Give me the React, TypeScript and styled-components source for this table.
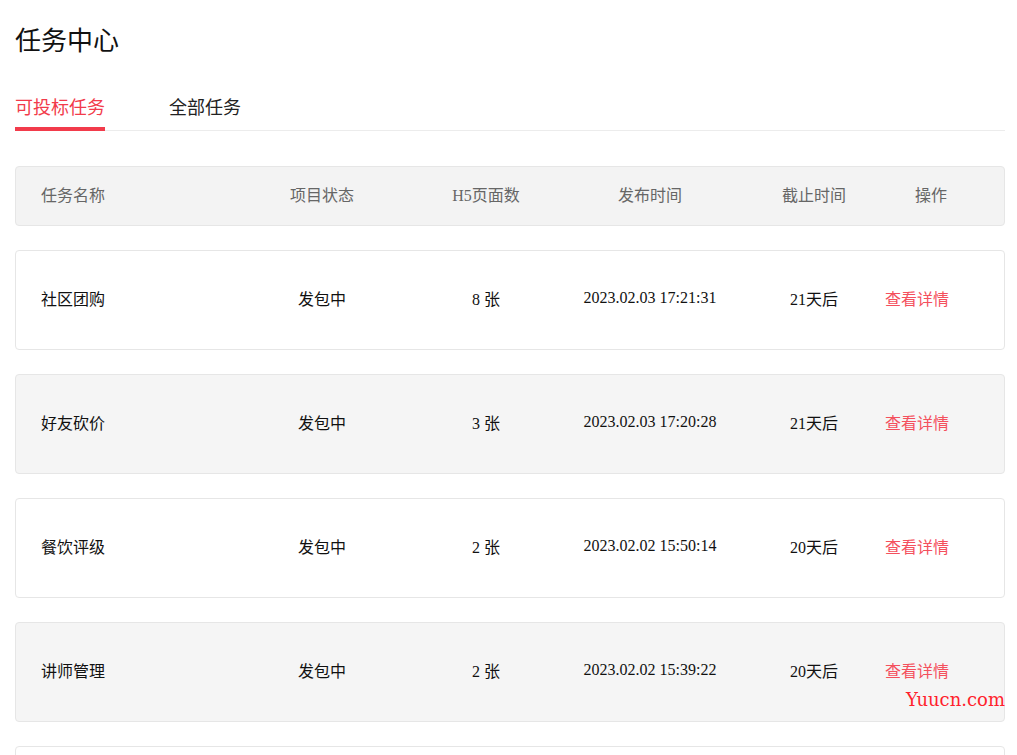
import React from 'react';
import styled, { createGlobalStyle } from 'styled-components';

const brandRed = '#f23b4b';

const GlobalStyle = createGlobalStyle`
  body {
    margin: 0;
    background: #fff;
    font-family: "Liberation Serif", "Noto Sans CJK SC", serif;
    color: #222;
  }
`;

const Page = styled.div`
  position: relative;
  padding: 24px 12px 40px 15px;
`;

const Title = styled.h1`
  margin: 0;
  font-size: 26px;
  line-height: 36px;
  font-weight: 400;
  color: #111;
`;

const TabBar = styled.div`
  display: flex;
  gap: 64px;
  margin-top: 36px;
  border-bottom: 1px solid #ececec;
`;

const Tab = styled.div<{ active?: boolean }>`
  font-size: 18px;
  line-height: 24px;
  padding-bottom: 7px;
  margin-bottom: -1px;
  border-bottom: 4px solid ${({ active }) => (active ? brandRed : 'transparent')};
  color: ${({ active }) => (active ? brandRed : '#222')};
  cursor: pointer;
`;

const Table = styled.div`
  display: flex;
  flex-direction: column;
  gap: 24px;
  margin-top: 35px;
`;

const Row = styled.div<{ head?: boolean; shaded?: boolean }>`
  display: grid;
  grid-template-columns: 199px 164px 164px 164px 164px 1fr;
  align-items: center;
  height: ${({ head }) => (head ? 60 : 100)}px;
  box-sizing: border-box;
  padding: 0 0 4px 25px;
  border: 1px solid #e6e6e6;
  border-radius: 4px;
  background: ${({ head, shaded }) => (head ? '#f3f3f3' : shaded ? '#f5f5f5' : '#fff')};
  font-size: 16px;
  color: ${({ head }) => (head ? '#666' : '#111')};
`;

const Cell = styled.div<{ align?: 'left' | 'center' }>`
  text-align: ${({ align }) => align || 'center'};
  white-space: nowrap;
`;

const ActionCell = styled.div<{ offset: number }>`
  margin-left: ${({ offset }) => offset}px;
  white-space: nowrap;
`;

const DetailLink = styled.a`
  color: #f4505d;
  text-decoration: none;
  cursor: pointer;
`;

const Watermark = styled.div`
  position: absolute;
  top: 689px;
  right: 12px;
  font-family: "DejaVu Serif", "Liberation Serif", serif;
  font-size: 18px;
  color: #ff1f2d;
`;

const tasks = [
  { name: '社区团购', status: '发包中', pages: 8, published: '2023.02.03 17:21:31', deadline: '21天后' },
  { name: '好友砍价', status: '发包中', pages: 3, published: '2023.02.03 17:20:28', deadline: '21天后' },
  { name: '餐饮评级', status: '发包中', pages: 2, published: '2023.02.02 15:50:14', deadline: '20天后' },
  { name: '讲师管理', status: '发包中', pages: 2, published: '2023.02.02 15:39:22', deadline: '20天后' },
  { name: '活动报名', status: '发包中', pages: 4, published: '2023.02.01 10:12:05', deadline: '19天后' },
];

export default function App() {
  return (
    <>
      <GlobalStyle />
      <Page>
        <Title>任务中心</Title>
        <TabBar>
          <Tab active>可投标任务</Tab>
          <Tab>全部任务</Tab>
        </TabBar>

        <Table>
          <Row head>
            <Cell align="left">任务名称</Cell>
            <Cell>项目状态</Cell>
            <Cell>H5页面数</Cell>
            <Cell>发布时间</Cell>
            <Cell>截止时间</Cell>
            <ActionCell offset={19}>操作</ActionCell>
          </Row>
          {tasks.map((t, i) => (
            <Row key={t.name} shaded={i % 2 === 1}>
              <Cell align="left">{t.name}</Cell>
              <Cell>{t.status}</Cell>
              <Cell>{t.pages} 张</Cell>
              <Cell>{t.published}</Cell>
              <Cell>{t.deadline}</Cell>
              <ActionCell offset={-11}>
                <DetailLink>查看详情</DetailLink>
              </ActionCell>
            </Row>
          ))}
        </Table>

        <Watermark>Yuucn.com</Watermark>
      </Page>
    </>
  );
}
